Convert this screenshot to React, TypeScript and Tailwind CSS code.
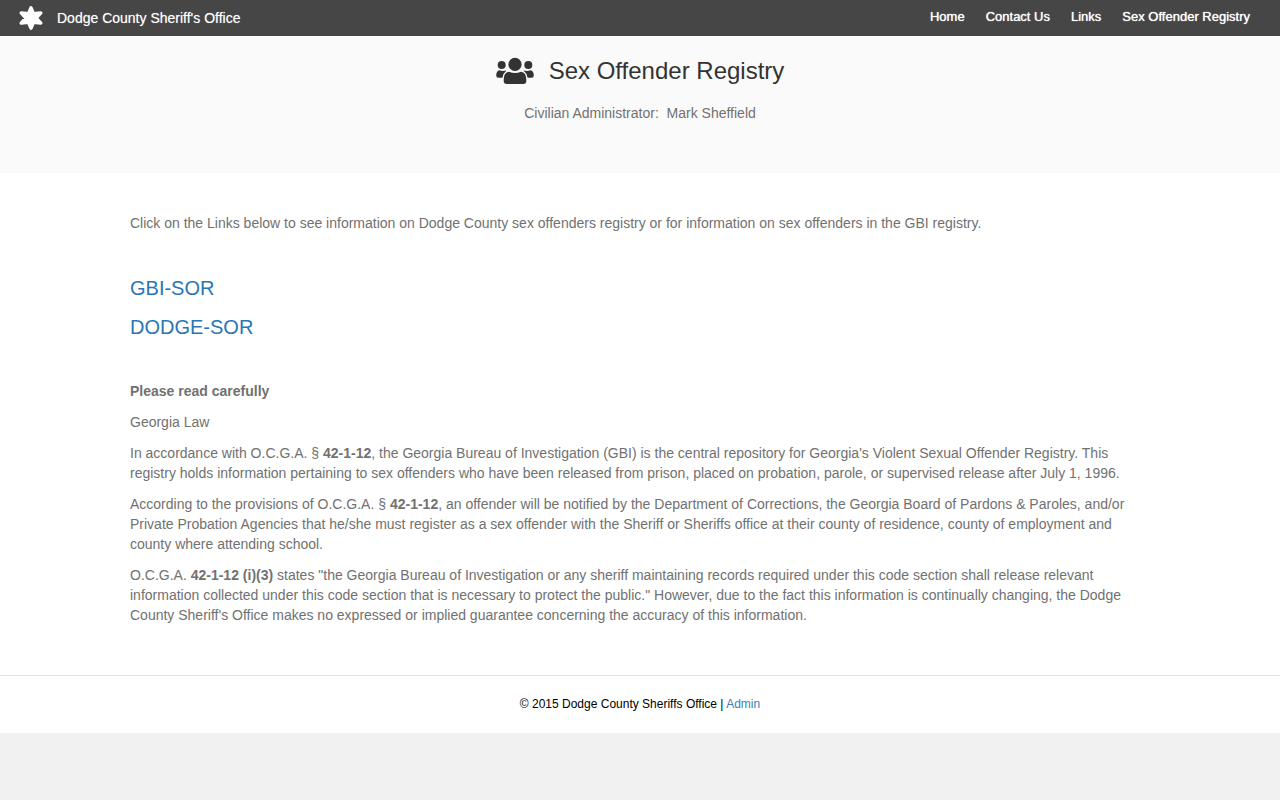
import React from "react";

const navItems = ["Home", "Contact Us", "Links", "Sex Offender Registry"];

function StarIcon() {
  return (
    <svg
      viewBox="0 0 26 26"
      className="size-[26px] fill-white stroke-white stroke-[3.5] [stroke-linejoin:round]"
      aria-hidden="true"
    >
      <path d="M13 2.800 L15.400 8.700 L22.800 7.900 L18 13 L22.800 18.100 L15.400 17.300 L13 23.200 L10.600 17.300 L3.200 18.100 L8 13 L3.200 7.900 L10.600 8.700 Z" />
    </svg>
  );
}

function UsersIcon() {
  return (
    <svg viewBox="0 0 38 28" className="h-7 w-[38px] fill-[#333333]" aria-hidden="true">
      <circle cx="19" cy="7.4" r="6.6" />
      <circle cx="5.7" cy="8" r="4" />
      <circle cx="32.3" cy="8" r="4" />
      <path d="M13 14.700 Q19 17.500 25 14.700 Q30.300 15.500 30.300 22.500 V24 Q30.300 27 27.300 27 H10.700 Q7.700 27 7.700 24 V22.500 Q7.700 15.500 13 14.700 Z" />
      <path d="M3.500 13.300 Q6 14.600 10.500 13.600 Q7 16.500 6.400 20.800 H2.500 Q0.200 20.800 0.200 18.500 Q0.200 14 3.500 13.300 Z" />
      <path d="M34.500 13.300 Q32 14.600 27.500 13.600 Q31 16.500 31.600 20.800 H35.500 Q37.800 20.800 37.800 18.500 Q37.800 14 34.500 13.300 Z" />
    </svg>
  );
}

export default function App() {
  return (
    <div className="min-h-screen bg-[#f1f1f1] font-['Liberation_Sans',Arial,sans-serif] text-sm leading-5 text-[#717171]">
      <header className="flex h-9 items-center justify-between bg-[#464646] pr-[30px] pl-[18px] text-white">
        <a href="#" className="flex items-center gap-[13px] [text-shadow:0_0_1px_#ffffff80]">
          <StarIcon />
          Dodge County Sheriff's Office
        </a>
        <nav className="flex gap-[21px] pb-[3px] text-[13px] [text-shadow:0_0_1px_#ffffff]">
          {navItems.map((item) => (
            <a key={item} href="#">
              {item}
            </a>
          ))}
        </nav>
      </header>

      <section className="flex flex-col items-center bg-[#fafafa] pt-5 pb-[50px]">
        <h1 className="flex items-center gap-[15px] text-2xl leading-[30px] text-[#333333]">
          <UsersIcon />
          Sex Offender Registry
        </h1>
        <p className="mt-[17px]">Civilian Administrator:&nbsp; Mark Sheffield</p>
      </section>

      <main className="bg-white px-5 pt-10 pb-[50px]">
        <div className="mx-auto flex max-w-[1020px] flex-col gap-[11px]">
          <p>
            Click on the Links below to see information on Dodge County sex offenders registry or for
            information on sex offenders in the GBI registry.
          </p>
          <div className="mt-[29px] mb-7 flex flex-col items-start gap-[9px] text-xl leading-[30px] text-[#2a76b5]">
            <a href="#">GBI-SOR</a>
            <a href="#">DODGE-SOR</a>
          </div>
          <p className="font-bold">Please read carefully</p>
          <p>Georgia Law</p>
          <p>
            In accordance with O.C.G.A. § <strong>42-1-12</strong>, the Georgia Bureau of Investigation
            (GBI) is the central repository for Georgia's Violent Sexual Offender Registry. This registry
            holds information pertaining to sex offenders who have been released from prison, placed on
            probation, parole, or supervised release after July 1, 1996.
          </p>
          <p>
            According to the provisions of O.C.G.A. § <strong>42-1-12</strong>, an offender will be
            notified by the Department of Corrections, the Georgia Board of Pardons &amp; Paroles, and/or
            Private Probation Agencies that he/she must register as a sex offender with the Sheriff or
            Sheriffs office at their county of residence, county of employment and county where attending
            school.
          </p>
          <p>
            O.C.G.A. <strong>42-1-12 (i)(3)</strong> states "the Georgia Bureau of Investigation or any
            sheriff maintaining records required under this code section shall release relevant
            information collected under this code section that is necessary to protect the public."
            However, due to the fact this information is continually changing, the Dodge County Sheriff's
            Office makes no expressed or implied guarantee concerning the accuracy of this information.
          </p>
        </div>
      </main>

      <footer className="border-t border-[#e5e5e5] bg-white pt-[18px] pb-[19px] text-center text-xs leading-5 text-black">
        © 2015 Dodge County Sheriffs Office |{" "}
        <a href="#" className="text-[#3a80bd]">
          Admin
        </a>
      </footer>
    </div>
  );
}
